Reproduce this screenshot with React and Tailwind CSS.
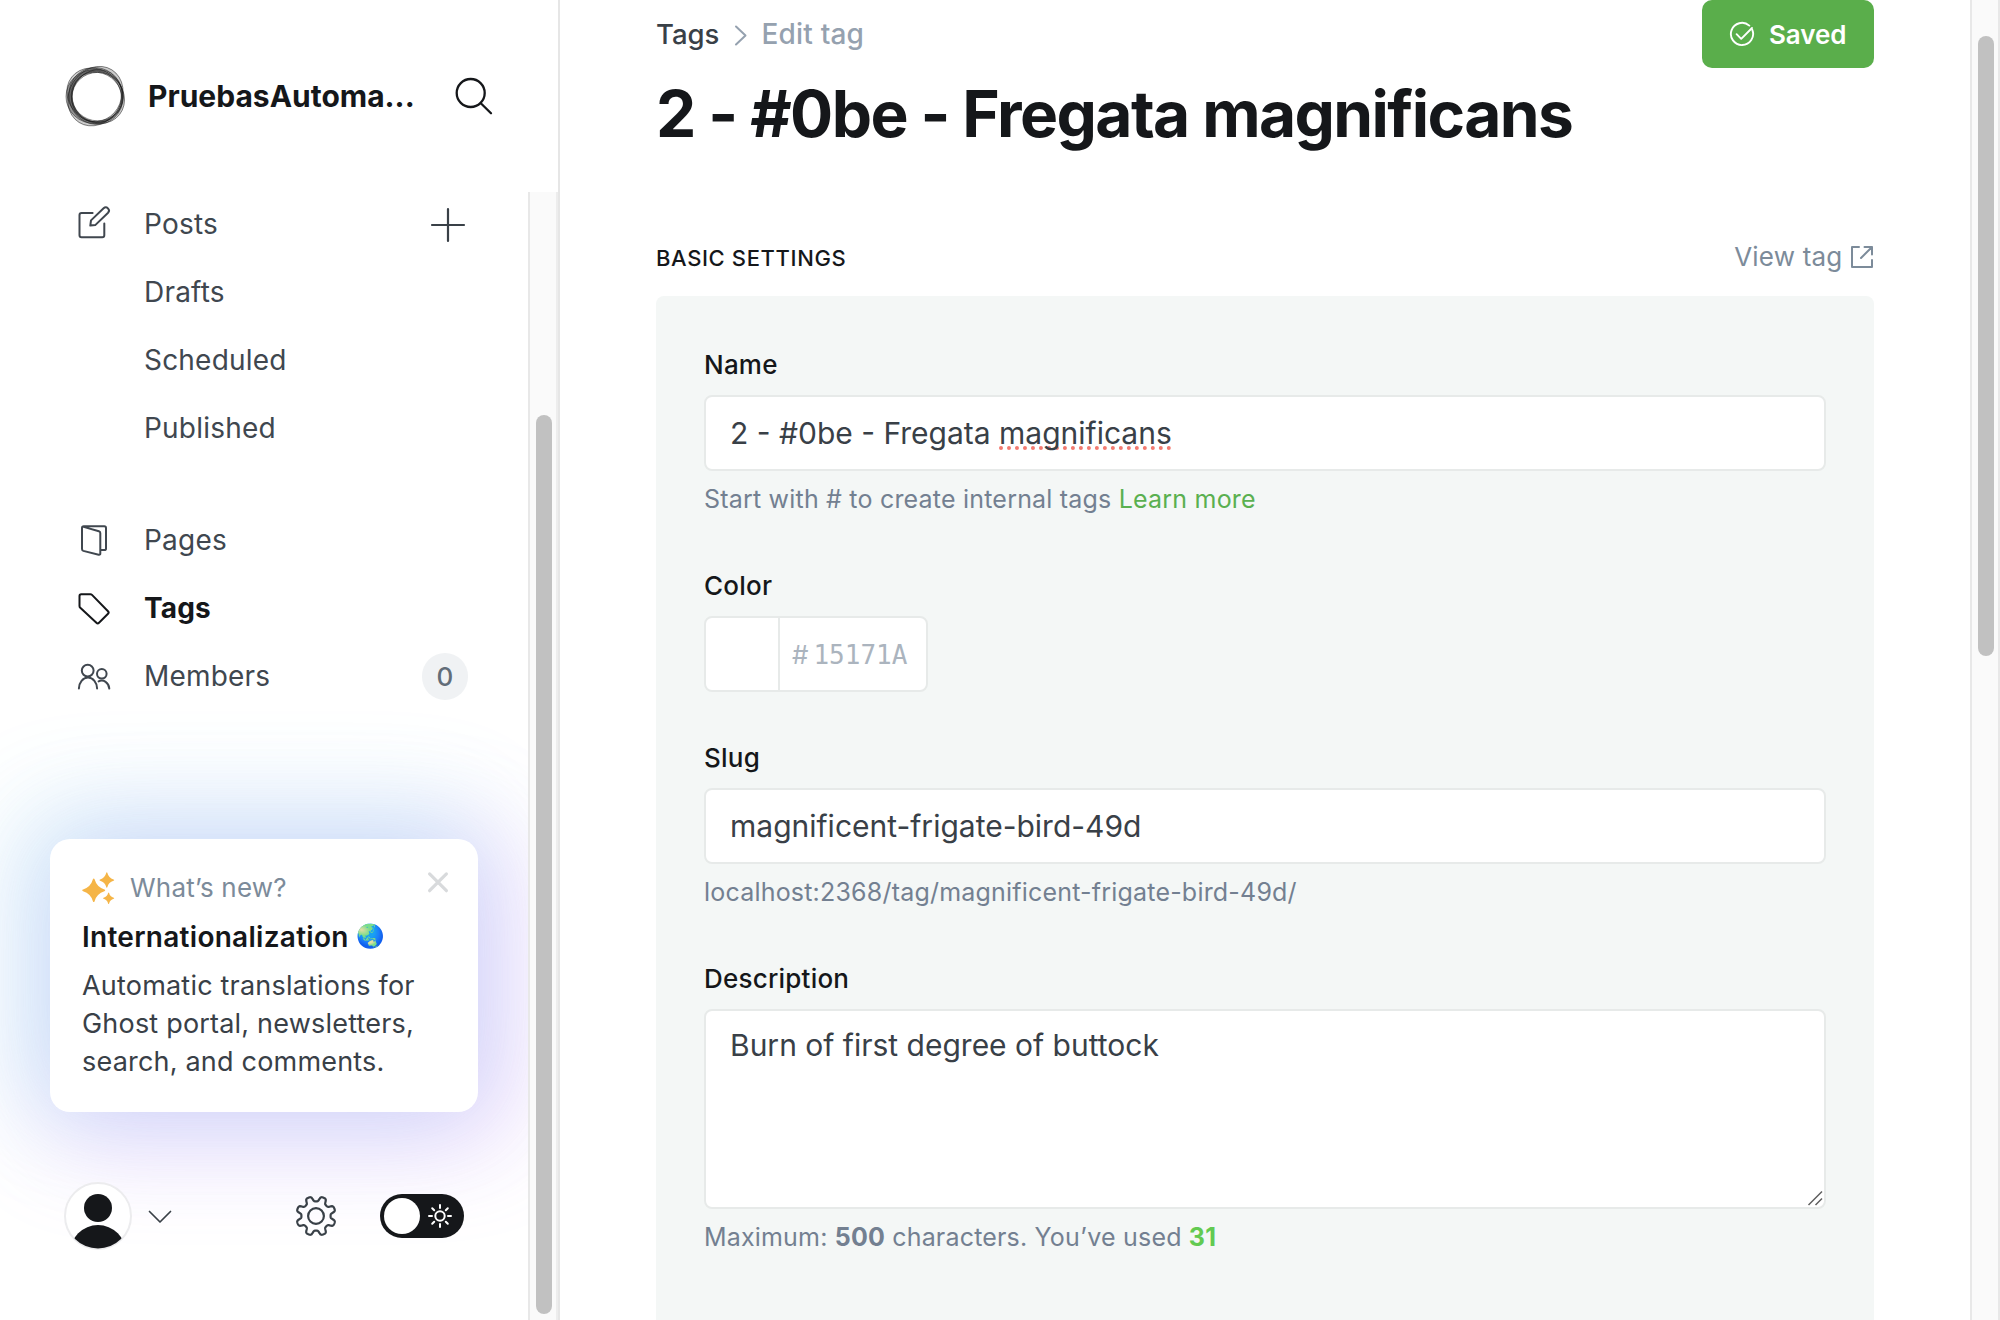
import React from 'react';

const GEAR = (() => {
  let d = '';
  for (let i = 0; i < 240; i++) {
    const a = (i / 240) * Math.PI * 2;
    const r = 17.2 - 2.6 * (Math.tanh(2.2 * Math.cos(8 * a)) / Math.tanh(2.2));
    d += `${i ? 'L' : 'M'}${(21 + r * Math.cos(a)).toFixed(2)} ${(21 + r * Math.sin(a)).toFixed(2)}`;
  }
  return d + 'Z';
})();

function Logo() {
  const ring = (cx, cy, rx, ry, rot, ix, iy, irx, iry, fill) => (
    <g transform={`rotate(${rot} 32 32)`}>
      <path
        fillRule="evenodd"
        fill="#000"
        fillOpacity={fill}
        stroke="#1a1a1a"
        strokeOpacity="0.6"
        strokeWidth="0.8"
        d={`M${cx - rx} ${cy}a${rx} ${ry} 0 1 0 ${rx * 2} 0a${rx} ${ry} 0 1 0 ${-rx * 2} 0ZM${ix - irx} ${iy}a${irx} ${iry} 0 1 0 ${irx * 2} 0a${irx} ${iry} 0 1 0 ${-irx * 2} 0Z`}
      />
    </g>
  );
  return (
    <svg viewBox="0 0 64 64" className="size-[64px] shrink-0">
      {ring(31.6, 31.6, 31, 26.2, -58, 32.6, 32.4, 26.6, 24.4, 0.2)}
      {ring(30.6, 32.6, 28.6, 27, 0, 33.6, 32.6, 25.4, 24.2, 0.28)}
      {ring(31.6, 32, 30.4, 26, 38, 33.2, 32.6, 26, 24.4, 0.2)}
      {ring(32, 32, 27, 28.6, -20, 32.4, 32.8, 24.6, 25.6, 0.14)}
    </svg>
  );
}

function NavIcon({ children, className }) {
  return (
    <svg
      viewBox="0 0 36 36"
      fill="none"
      stroke="currentColor"
      strokeWidth="2"
      strokeLinecap="round"
      strokeLinejoin="round"
      className={`size-[36px] shrink-0 ${className || ''}`}
    >
      {children}
    </svg>
  );
}

function NavRow({ icon, label, active, children }) {
  return (
    <div className={`flex h-[68px] items-center pr-[60px] pl-[76px] text-[28px] ${active ? 'font-bold tracking-[0.15px] text-[#15171a]' : 'tracking-[0.2px] text-[#40474f]'}`}>
      <div className="w-[68px] shrink-0">{icon}</div>
      <span className="flex-1">{label}</span>
      {children}
    </div>
  );
}

function Sidebar() {
  return (
    <aside className="flex h-full w-[560px] shrink-0 flex-col border-r-2 border-[#e6e6e6]">
      <div className="flex h-[192px] items-center pl-[64px]">
        <Logo />
        <span className="ml-[20px] w-[270px] text-[30px] leading-[40px] font-bold whitespace-nowrap text-[#15171a]">PruebasAutoma...</span>
        <svg viewBox="0 0 40 40" fill="none" stroke="#15171a" strokeWidth="2.3" strokeLinecap="round" className="ml-[36px] size-[40px]">
          <circle cx="16.7" cy="17" r="14" />
          <path d="M26.8 27.3L37 37.3" />
        </svg>
      </div>
      <div className="flex min-h-0 flex-1">
        <div className="flex w-[528px] flex-col overflow-hidden">
          <nav className="-mt-[2px] shrink-0">
            <NavRow
              label="Posts"
              icon={
                <NavIcon className="overflow-visible">
                  <path d="M16.6 7H5.5a2 2 0 0 0-2 2v20.2a2 2 0 0 0 2 2h20.8a2 2 0 0 0 2-2V17.6" />
                  <path d="M14.3 19.6l.7-5.2L27.6 2.3a3.15 3.15 0 0 1 4.5 4.4L19.5 18.9z" />
                </NavIcon>
              }
            >
              <svg viewBox="0 0 36 36" stroke="#394047" strokeWidth="2.2" strokeLinecap="round" className="mr-[2px] size-[36px] translate-y-[1px]">
                <path d="M18 2v32M2 18h32" />
              </svg>
            </NavRow>
            <NavRow label="Drafts" />
            <NavRow label="Scheduled" />
            <NavRow label="Published" />
            <div className="h-[44px]" />
            <NavRow
              label="Pages"
              icon={
                <NavIcon>
                  <path d="M7.6 4.9L22.9 9.3q1.4.4 1.4 1.8V31.4q0 1.7-1.6 1.3L7.3 28.9Q6 28.5 6 27.1V6q0-1.8 1.8-1.8H28.3a1.7 1.7 0 0 1 1.7 1.7v20.5a1.7 1.7 0 0 1-1.7 1.7h-3.8" />
                </NavIcon>
              }
            />
            <NavRow
              active
              label="Tags"
              icon={
                <NavIcon>
                  <path d="M5.2 4.2h9.2q.9 0 1.6.7L32 21.2q1.3 1.3 0 2.6l-9 9q-1.3 1.3-2.6 0L4.3 17.8q-.8-.8-.8-1.9V6q0-1.8 1.7-1.8z" />
                </NavIcon>
              }
            />
            <NavRow
              label="Members"
              icon={
                <NavIcon>
                  <circle cx="11.7" cy="12.6" r="5.9" />
                  <circle cx="25.8" cy="15.8" r="4.8" />
                  <path d="M2.9 30.6a9.1 11 0 0 1 18.2 0M22.6 23.4a7.6 8.6 0 0 1 10.7 7.2" />
                </NavIcon>
              }
            >
              <span className="mt-[1px] flex h-[47px] w-[46px] items-center justify-center rounded-full bg-[#f0f2f4] text-[26px] font-medium text-[#626d79]">0</span>
            </NavRow>
          </nav>
          <div className="mt-[129px] ml-[50px] flex h-[273px] w-[428px] shrink-0 flex-col rounded-[20px] bg-white pl-[32px] shadow-[-14px_-12px_100px_16px_rgba(75,222,228,0.23),14px_12px_100px_16px_rgba(198,105,248,0.3)]">
            <div className="mt-[27px] flex h-[44px]">
              <svg viewBox="0 0 36 36" fill="#f5b547" className="mt-[4px] size-[36px]">
                <path d="M11.700 8.400Q12.300 8.400 12.600 9.300 14.600 16.900 22.400 19.500 23.200 19.800 23.200 20.300 23.200 20.900 22.400 21.200 14.600 23.700 12.600 31.200 12.300 32.100 11.700 32.100 11.200 32.100 10.900 31.200 8.900 23.700 1.100 21.200 .2 20.900 .2 20.300 .2 19.800 1.100 19.500 8.900 16.900 10.900 9.300 11.200 8.400 11.700 8.400z" />
                <path d="M24.800 2.300Q25.200 2.300 25.400 3 26.600 7.900 31.500 9.500 32.200 9.800 32.200 10.100 32.200 10.500 31.500 10.800 26.600 12.300 25.400 17.100 25.200 17.800 24.800 17.800 24.400 17.800 24.200 17.100 23 12.300 18.100 10.800 17.500 10.500 17.500 10.100 17.500 9.800 18.100 9.500 23 7.900 24.200 3 24.400 2.300 24.800 2.300z" />
                <path d="M26.600 22.500Q26.900 22.500 27.100 23.100 28 26.700 31.700 27.800 32.200 28 32.200 28.300 32.200 28.600 31.700 28.800 28 29.900 27.100 33.400 26.900 33.900 26.600 33.900 26.300 33.900 26.100 33.400 25.200 29.900 21.600 28.800 21 28.600 21 28.300 21 28 21.600 27.800 25.200 26.700 26.100 23.100 26.300 22.500 26.600 22.500z" />
              </svg>
              <span className="ml-[12px] flex-1 text-[26px] leading-[44px] tracking-[0.2px] text-[#7c8b9a]">What’s new?</span>
              <svg viewBox="0 0 24 24" stroke="#d8dadc" strokeWidth="3.2" strokeLinecap="round" className="mt-[4px] mr-[28.5px] size-[24px]">
                <path d="M3.600 3.900l16.800 16.800M20.400 3.900L3.600 20.700" />
              </svg>
            </div>
            <div className="mt-[7px] flex h-[40px] items-center text-[28px] leading-[40px] font-semibold tracking-[0.28px] text-[#15171a]">
              Internationalization
              <span className="ml-[7px] -mt-[2px] text-[23px]">🌏</span>
            </div>
            <div className="mt-[10px] text-[27px] leading-[38px] tracking-[0.2px] whitespace-nowrap text-[#394047]">
              Automatic translations for
              <br />
              Ghost portal, newsletters,
              <br />
              search, and comments.
            </div>
          </div>
          <div className="mt-[70px] flex h-[68px] shrink-0 items-center pl-[64px]">
            <svg viewBox="0 0 68 68" className="size-[68px]">
              <defs>
                <clipPath id="avatar">
                  <circle cx="34" cy="34" r="32.500" />
                </clipPath>
              </defs>
              <circle cx="34" cy="34" r="33" fill="#fff" stroke="#ececee" strokeWidth="2" />
              <g clipPath="url(#avatar)" fill="#15171a">
                <circle cx="34" cy="26" r="14" />
                <circle cx="34" cy="71" r="28" />
              </g>
            </svg>
            <svg viewBox="0 0 24 14" fill="none" stroke="#394047" strokeWidth="1.700" strokeLinecap="round" strokeLinejoin="round" className="mt-[2px] ml-[16px] h-[14px] w-[24px]">
              <path d="M1.500 1.500L12 12 22.500 1.500" />
            </svg>
            <svg viewBox="0 0 42 42" fill="none" stroke="#394047" strokeWidth="2.200" strokeLinejoin="round" className="ml-[123px] size-[42px]">
              <path d={GEAR} />
              <circle cx="21" cy="21" r="7.900" />
            </svg>
            <div className="ml-[43px] flex h-[44px] w-[84px] items-center rounded-full bg-[#15171a] px-[4px]">
              <div className="size-[36px] rounded-full bg-white" />
              <svg viewBox="0 0 26 26" fill="none" stroke="#fff" strokeWidth="2" strokeLinecap="round" className="ml-[7px] size-[26px]">
                <circle cx="13" cy="13" r="4.700" />
                <path d="M13 2v3M13 21v3M2 13h3M21 13h3M5.200 5.200l2 2M18.800 18.800l2 2M5.200 20.800l2-2M18.800 7.200l2-2" />
              </svg>
            </div>
          </div>
        </div>
        <div className="w-[30px] shrink-0 border-x-2 border-r-[#ededed] border-l-[#e8e8e8] bg-[#fafafa] pt-[223px] pl-[6px]">
          <div className="h-[899px] w-[16px] rounded-full bg-[#c1c1c1]" />
        </div>
      </div>
    </aside>
  );
}

const labelCls = 'h-[41px] text-[26px] leading-[41px] font-medium tracking-[0.22px] text-[#15171a]';
const helpCls = 'mt-[10px] h-[37px] text-[25px] leading-[37px] tracking-[0.2px] text-[#738091]';
const boxCls = 'rounded-[8px] border-2 border-[#e7eae9] bg-white px-[24px] text-[30px] text-[#394047]';

function Main() {
  return (
    <main className="flex-1 overflow-hidden pr-[96px] pl-[96px]">
      <div className="flex h-[68px] items-center justify-between">
        <div className="flex items-center text-[28px] leading-[40px] font-medium tracking-[0.2px]">
          <span className="text-[27.500px] tracking-[0px] text-[#394047]">Tags</span>
          <svg viewBox="0 0 14 24" fill="none" stroke="#95a1af" strokeWidth="2" strokeLinecap="round" strokeLinejoin="round" className="mt-[2px] ml-[15px] h-[24px] w-[14px]">
            <path d="M2 3.500l9.500 9L2 21.500" />
          </svg>
          <span className="ml-[13px] text-[#95a1af]">Edit tag</span>
        </div>
        <div className="flex h-[68px] w-[172px] items-center rounded-[10px] bg-[#5aae4b] pl-[27px] text-[26px] font-semibold tracking-[-0.1px] text-white">
          <svg viewBox="0 0 26 26" fill="none" stroke="#fff" strokeWidth="1.900" strokeLinecap="round" strokeLinejoin="round" className="size-[26px]">
            <path d="M20.300 4.600A11.100 11.100 0 1 0 23.300 8.800" />
            <path d="M7.600 13.200l4.600 4.600L23 7" />
          </svg>
          <span className="ml-[14px]">Saved</span>
        </div>
      </div>
      <h1 className="mt-[6px] h-[80px] text-[64px] leading-[80px] font-bold tracking-[-1.600px] whitespace-nowrap text-[#15171a]">2 - #0be - Fregata magnificans</h1>
      <div className="mt-[83px] flex h-[40px] items-center justify-between">
        <span className="mt-[3px] text-[22px] font-medium tracking-[0.620px] text-[#15171a]">BASIC SETTINGS</span>
        <span className="flex items-center text-[26px] leading-[40px] tracking-[0.200px] text-[#7c8b9a]">
          View tag
          <svg viewBox="0 0 24 24" fill="none" stroke="#7c8b9a" strokeWidth="2" strokeLinecap="round" strokeLinejoin="round" className="ml-[7.500px] size-[24px]">
            <path d="M9 2H2v20h20V15M14.500 2H22V9.500M22 2L11 13" />
          </svg>
        </span>
      </div>
      <section className="mt-[19px] h-[1100px] rounded-[8px] bg-[#f4f7f6] px-[48px] pt-[48px]">
        <div className={labelCls}>Name</div>
        <div className={`${boxCls} mt-[10px] h-[76px] leading-[72px]`}>
          2 - #0be - Fregata{' '}
          <span className="underline decoration-[#f27a70] decoration-dotted decoration-[3.500px] underline-offset-[2px] [text-decoration-skip-ink:none]">magnificans</span>
        </div>
        <div className={helpCls}>
          Start with # to create internal tags <span className="text-[#5ab050]">Learn more</span>
        </div>

        <div className={`${labelCls} mt-[47px]`}>Color</div>
        <div className="mt-[10px] flex h-[76px] w-[224px] overflow-hidden rounded-[8px] border-2 border-[#e7eae9] bg-white text-[26px] leading-[73px] text-[#abb4be]">
          <div className="w-[74px] border-r-2 border-[#e7eae9]" />
          <span className="ml-[12px]">#</span>
          <span className="mt-[1px] ml-[5px] font-['DejaVu_Sans_Mono',monospace]">15171A</span>
        </div>

        <div className={`${labelCls} mt-[45px]`}>Slug</div>
        <div className={`${boxCls} mt-[10px] h-[76px] leading-[72px]`}>magnificent-frigate-bird-49d</div>
        <div className={helpCls}>localhost:2368/tag/magnificent-frigate-bird-49d/</div>

        <div className={`${labelCls} mt-[47px]`}>Description</div>
        <div className={`${boxCls} mt-[10px] flex h-[200px] justify-between pt-[12px] leading-[45px]`}>
          <span>Burn of first degree of buttock</span>
          <svg viewBox="0 0 16 16" stroke="#5f5f5f" strokeWidth="1.500" className="mr-[-23px] mb-[1px] size-[16px] self-end">
            <path d="M1.500 15L15 1.500M8.500 15L15 8.500" />
          </svg>
        </div>
        <div className={`${helpCls} tracking-[0.180px]`}>
          Maximum: <b>500</b> characters. You’ve used <b className="text-[#62ca51]">31</b>
        </div>
      </section>
    </main>
  );
}

export default function App() {
  return (
    <div className="flex h-[1320px] w-[2000px] overflow-hidden bg-white font-['Inter',sans-serif]">
      <Sidebar />
      <Main />
      <div className="w-[30px] shrink-0 border-x-2 border-[#e8e8e8] bg-[#fafafa] pt-[36px] pl-[6px]">
        <div className="h-[620px] w-[16px] rounded-full bg-[#c1c1c1]" />
      </div>
    </div>
  );
}
